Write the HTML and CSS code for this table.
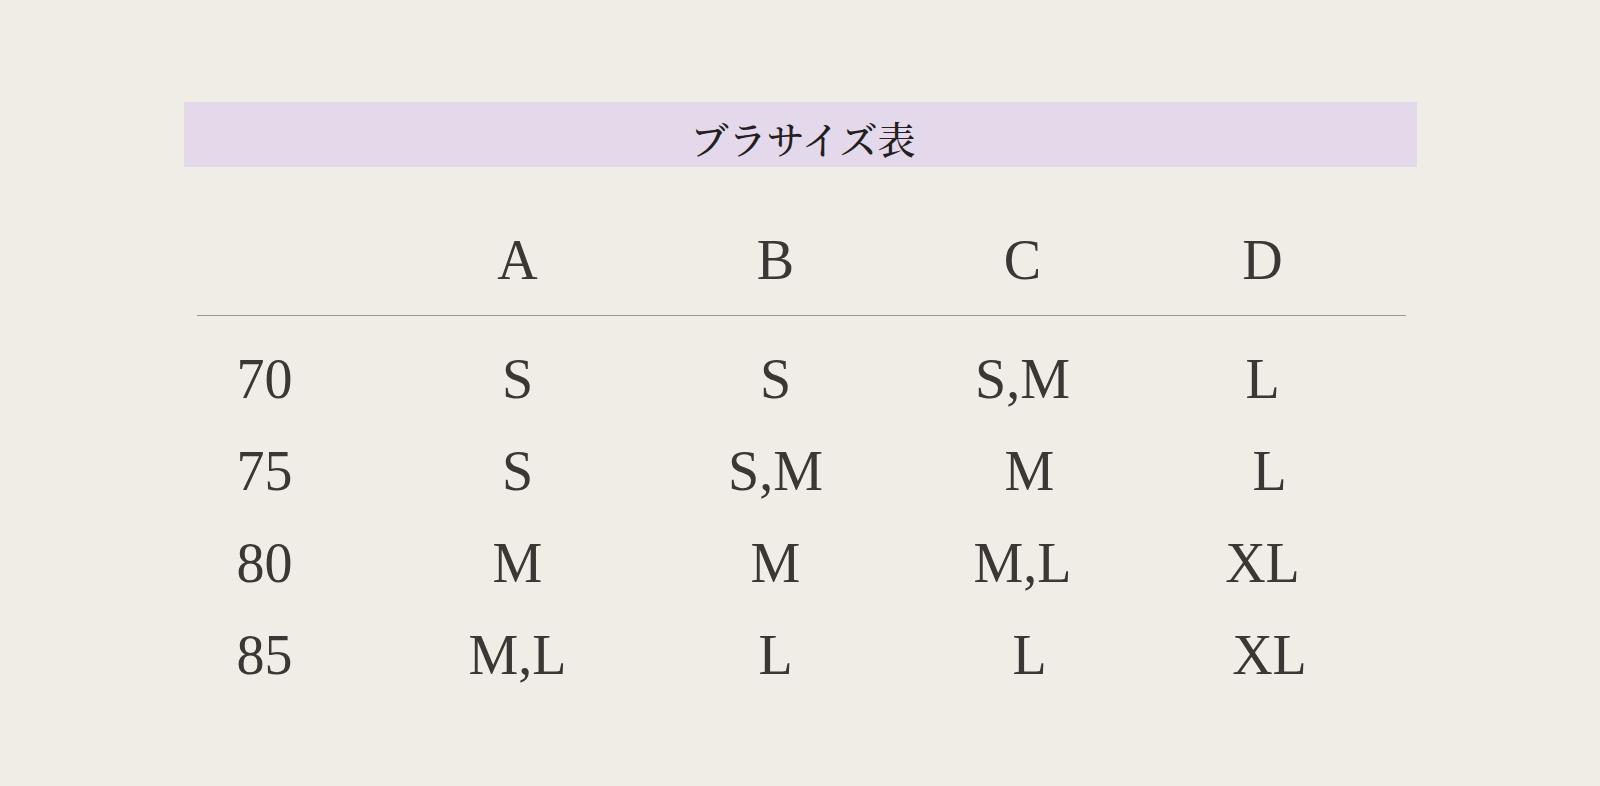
FILE: index.html
```html
<!DOCTYPE html>
<html lang="ja">
<head>
<meta charset="utf-8">
<title>ブラサイズ表</title>
<link rel="stylesheet" href="styles.css">
</head>
<body>
<div class="wrap">
  <h1 class="title">ブラサイズ表</h1>
  <div class="table">
    <div class="row head">
      <div class="cell label"></div>
      <div class="cell">A</div>
      <div class="cell">B</div>
      <div class="cell">C</div>
      <div class="cell last">D</div>
    </div>
    <div class="row first">
      <div class="cell label">70</div>
      <div class="cell">S</div>
      <div class="cell">S</div>
      <div class="cell">S,M</div>
      <div class="cell last">L</div>
    </div>
    <div class="row">
      <div class="cell label">75</div>
      <div class="cell">S</div>
      <div class="cell">S,M</div>
      <div class="cell">&nbsp;M</div>
      <div class="cell last">&nbsp;L</div>
    </div>
    <div class="row">
      <div class="cell label">80</div>
      <div class="cell">M</div>
      <div class="cell">M</div>
      <div class="cell">M,L</div>
      <div class="cell last">XL</div>
    </div>
    <div class="row">
      <div class="cell label">85</div>
      <div class="cell">M,L</div>
      <div class="cell">L</div>
      <div class="cell">&nbsp;L</div>
      <div class="cell last">&nbsp;XL</div>
    </div>
  </div>
</div>
</body>
</html>
```

FILE: styles.css
```css
html, body {
  margin: 0;
  padding: 0;
  background: #f0ede7;
}

body {
  width: 1600px;
  height: 786px;
  overflow: hidden;
}

.wrap {
  width: 1233px;
  margin: 102px auto 0;
}

.title {
  box-sizing: border-box;
  margin: 0;
  height: 65px;
  padding: 6px 0 0 6px;
  background: #e3d9eb;
  color: #231e1f;
  font-family: "Noto Serif CJK JP", "Noto Sans CJK JP", serif;
  font-weight: 500;
  font-size: 38px;
  line-height: 59px;
  text-align: center;
}

.table {
  width: 1209px;
  margin: 41px 0 0 13px;
  font-family: "Liberation Serif", "Times New Roman", serif;
  font-size: 56px;
  color: #3b3735;
}

.row {
  display: grid;
  grid-template-columns: 194px 254px 262px 232px 267px;
}

.cell {
  line-height: 64px;
  padding: 14px 0;
  text-align: center;
  white-space: pre;
}

.cell.label {
  text-align: left;
  padding-left: 40px;
}

.cell.last {
  padding-right: 19px;
}

.row.head {
  border-bottom: 1px solid #9d9891;
}

.row.head .cell {
  padding-top: 20px;
  padding-bottom: 23px;
}

.row.first .cell {
  padding-top: 31px;
}
```
